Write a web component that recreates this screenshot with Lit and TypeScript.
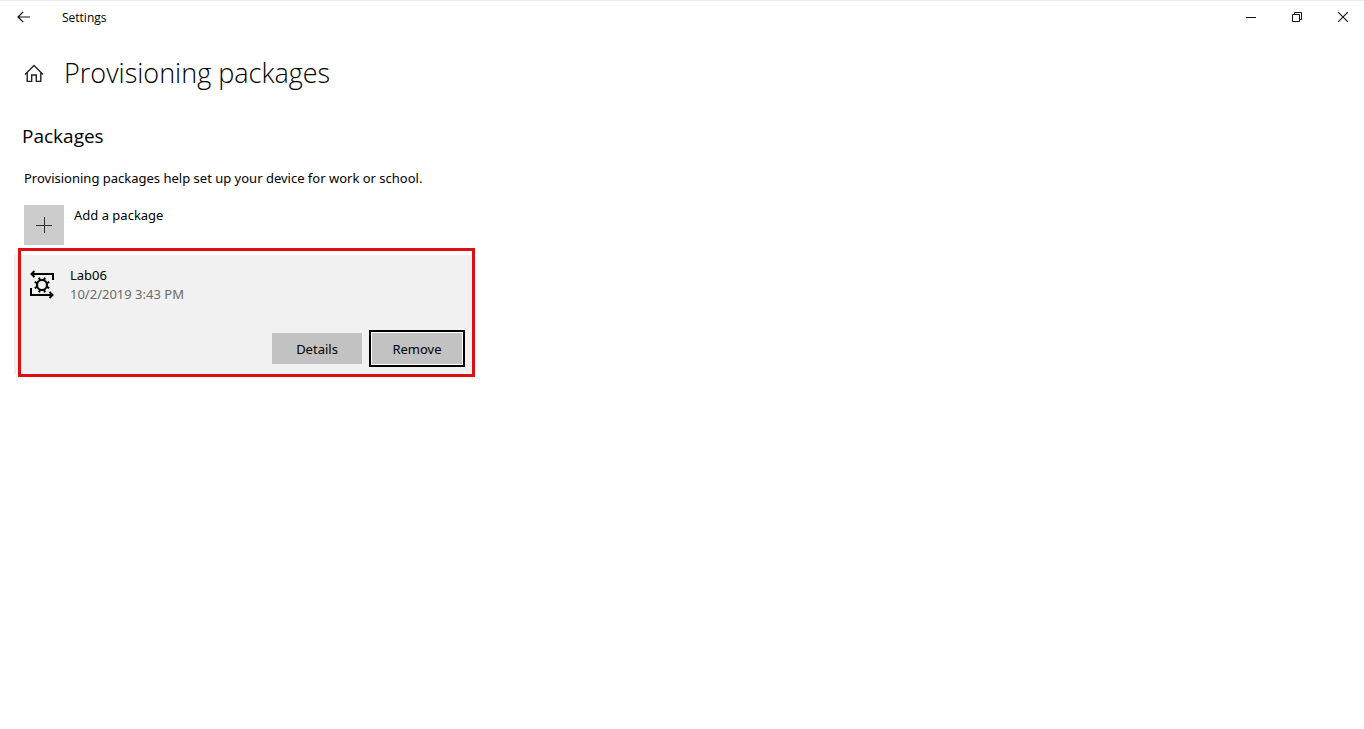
import { LitElement, html, css } from "lit";
import { customElement } from "lit/decorators.js";

@customElement("app-root")
export class AppRoot extends LitElement {
  static styles = css`
    :host {
      display: block;
      min-height: 100vh;
      box-sizing: border-box;
      border-top: 1px solid #ececec;
      background: #fff;
      color: #000;
      font: 13px/20px "Segoe UI", "Noto Sans", "Open Sans", sans-serif;
    }
    * { box-sizing: border-box; }
    svg { display: block; }
    h1, h2, p { margin: 0; font-weight: 400; }
    button { border: 0; padding: 0; background: none; color: inherit; font: inherit; }
    .bar { display: flex; height: 32px; align-items: center; }
    .back { width: 48px; height: 32px; display: grid; place-items: center; }
    .app { flex: 1; padding: 2px 0 0 14px; font: 12px/20px "Segoe UI", "Open Sans", sans-serif; }
    .windows { display: flex; margin-right: -2px; }
    .win { width: 46px; height: 32px; display: grid; place-items: center; }
    .head { display: flex; align-items: center; gap: 20px; padding: 20px 24px 0; }
    h1 { font: 300 27px/40px "Segoe UI", "Open Sans", sans-serif; }
    main { padding: 0 14px; }
    h2 { padding: 30px 8px 0; font: 19px/26px "Segoe UI", "Open Sans", sans-serif; }
    .intro { padding: 19px 10px 0; }
    .add { display: flex; gap: 10px; margin: 17px 10px 10px; text-align: left; }
    .plus { width: 40px; height: 40px; display: grid; place-items: center; background: #ccc; }
    .card { position: relative; width: 458px; max-width: 100%; background: #f1f1f1; padding: 11px 8px 10px 15px; }
    .card::after {
      content: "";
      position: absolute;
      inset: -7px -3px -3px 4px;
      border: 3px solid #dc1010;
      pointer-events: none;
    }
    .info { display: flex; gap: 15px; }
    .info p { line-height: 19px; }
    .info .date { color: #6b6b6b; }
    .actions { display: flex; justify-content: flex-end; gap: 10px; padding: 29px 2px 0 0; }
    .action { width: 90px; height: 31px; background: #c2c2c2; }
    .focused { outline: 2px solid #000; outline-offset: 1px; box-shadow: 0 0 0 1px #fff; }
  `;

  render() {
    return html`
      <header class="bar">
        <button class="back" aria-label="Back">
          <svg width="14" height="12" viewBox="0 0 14 12" fill="none" stroke="#111" stroke-width="1.2"><path d="M13 6H1M6.2.8 1 6l5.2 5.2" /></svg>
        </button>
        <span class="app">Settings</span>
        <div class="windows">
          <button class="win" aria-label="Minimize">
            <svg width="10" height="10" viewBox="0 0 10 10" fill="none" stroke="#111"><path d="M0 5.5h10" /></svg>
          </button>
          <button class="win" aria-label="Restore">
            <svg width="10" height="10" viewBox="0 0 10 10" fill="none" stroke="#111"><path d="M.5 2.5h7v7h-7zM2.5 2.5v-2h7v7h-2" /></svg>
          </button>
          <button class="win" aria-label="Close">
            <svg width="10" height="10" viewBox="0 0 10 10" fill="none" stroke="#111" stroke-width="1.1"><path d="m0 0 10 10M10 0 0 10" /></svg>
          </button>
        </div>
      </header>
      <div class="head">
        <button aria-label="Home">
          <svg width="20" height="20" viewBox="0 0 20 20" fill="none" stroke="#222" stroke-width="1.4"><path d="M1 11.4 10 2.6l9 8.8M3.2 9.6v8.800h4.500v-6.400h4.600v6.400h4.500V9.600" /></svg>
        </button>
        <h1>Provisioning packages</h1>
      </div>
      <main>
        <h2>Packages</h2>
        <p class="intro">Provisioning packages help set up your device for work or school.</p>
        <button class="add">
          <span class="plus">
            <svg width="16" height="16" viewBox="0 0 16 16" fill="none" stroke="#333"><path d="M0 8.5h16M8.5 0v16" /></svg>
          </span>
          <span>Add a package</span>
        </button>
        <section class="card">
          <div class="info">
            <svg width="26" height="38" viewBox="0 0 26 38" fill="none" stroke="#000" stroke-width="2">
              <path d="M2 8h22v6M2 22v7h22" />
              <path d="M5.500 5 2.500 8l3 3M20.500 26l3 3-3 3" />
              <circle cx="13" cy="19" r="5" stroke-width="2.200" />
              <path d="M14.900 14.400 16 11.700M17.600 17.100l2.700-1.100M17.600 20.900l2.700 1.100M14.900 23.600l1.100 2.700M11.100 23.600 10 26.300M8.400 20.900 5.700 22M8.400 17.100 5.700 16M11.100 14.400 10 11.700" />
            </svg>
            <div>
              <p>Lab06</p>
              <p class="date">10/2/2019 3:43 PM</p>
            </div>
          </div>
          <div class="actions">
            <button class="action">Details</button>
            <button class="action focused">Remove</button>
          </div>
        </section>
      </main>
    `;
  }
}
